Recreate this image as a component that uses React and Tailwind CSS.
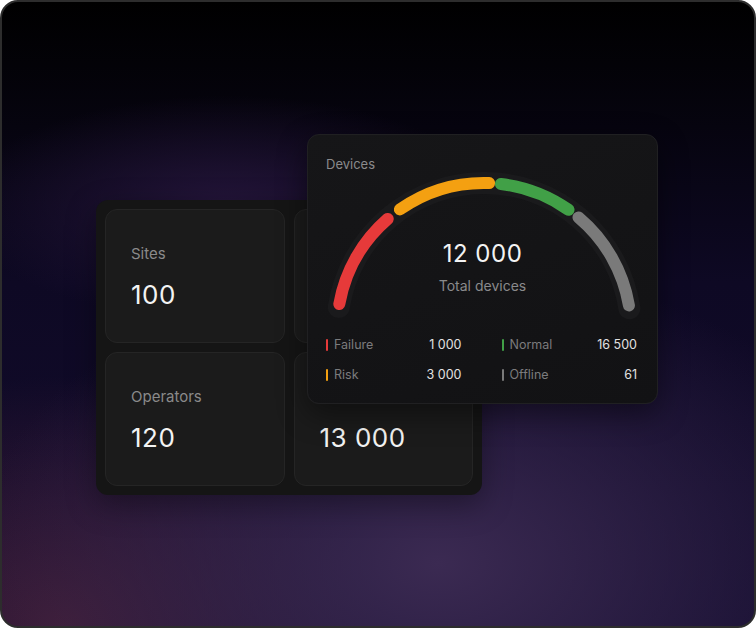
const segments = [
  { from: 169.8, to: 130.9, color: '#e63a3a' },
  { from: 124.9, to: 88, color: '#f4a011' },
  { from: 83.4, to: 54.9, color: '#41a047' },
  { from: 50, to: 9.6, color: '#7a7a7a' },
];

const legend = [
  { label: 'Failure', value: '1 000', bar: 'bg-[#e63a3a]' },
  { label: 'Normal', value: '16 500', bar: 'bg-[#41a047]' },
  { label: 'Risk', value: '3 000', bar: 'bg-[#f4a011]' },
  { label: 'Offline', value: '61', bar: 'bg-[#7a7a7a]' },
];

const stats = [
  { label: 'Sites', value: '100' },
  { label: 'Gateways', value: '42' },
  { label: 'Operators', value: '120' },
  { label: 'Sensors', value: '13 000' },
];

// angles are in degrees, counter-clockwise from the +x axis
function arc(cx, cy, r, a0, a1) {
  const p = (a) => [cx + r * Math.cos((a * Math.PI) / 180), cy - r * Math.sin((a * Math.PI) / 180)];
  const [x0, y0] = p(a0);
  const [x1, y1] = p(a1);
  return `M${x0.toFixed(2)} ${y0.toFixed(2)} A${r} ${r} 0 0 1 ${x1.toFixed(2)} ${y1.toFixed(2)}`;
}

function Gauge() {
  const cx = 176;
  const cy = 158;
  const r = 147;
  return (
    <div className="relative h-[150px]">
      <svg width="351" height="150" viewBox="0 0 351 150" className="block" aria-hidden="true">
        <path d={arc(cx, cy, r, 171, 8.5)} fill="none" stroke="#1a1a1c" strokeWidth="22" strokeLinecap="round" />
        {segments.map((s) => (
          <path key={s.color} d={arc(cx, cy, r, s.from, s.to)} fill="none" stroke={s.color} strokeWidth="12" strokeLinecap="round" />
        ))}
      </svg>
      <div className="absolute inset-x-0 top-[68px] flex flex-col items-center">
        <span className="text-[24px] leading-[28px] tracking-[0.5px] text-[#f3f3f3]">12 000</span>
        <span className="mt-[8px] text-[14px] leading-[20px] text-[#8a8a8c]">Total devices</span>
      </div>
    </div>
  );
}

function DevicesCard() {
  return (
    <div className="absolute right-0 top-0 h-[270px] w-[351px] rounded-[12px] border border-[#202022] bg-[linear-gradient(160deg,#161618,#121214)] shadow-[0_10px_30px_rgba(0,0,0,0.45)]">
      <p className="pl-[18px] pt-[21px] text-[13px] leading-[16px] text-[#8a8a8c]">Devices</p>
      <Gauge />
      <div className="mt-[15px] grid grid-cols-2 gap-x-[40px] gap-y-[14px] pl-[18px] pr-[20px]">
        {legend.map((item) => (
          <div key={item.label} className="flex h-[16px] items-center text-[12.5px] leading-[16px]">
            <span className={`h-[12px] w-[2px] rounded-full ${item.bar}`} />
            <span className="ml-[6px] text-[#7b7b7d]">{item.label}</span>
            <span className="ml-auto text-[#e2e2e2]">{item.value}</span>
          </div>
        ))}
      </div>
    </div>
  );
}

function StatsCard() {
  return (
    <div className="mt-[66px] grid w-[386px] grid-cols-2 gap-[9px] rounded-[12px] bg-[#151515] p-[9px] shadow-[0_10px_30px_rgba(0,0,0,0.35)]">
      {stats.map((s) => (
        <div key={s.label} className="h-[134px] rounded-[12px] border border-[#252525] bg-[#1b1b1b] pl-[25px] pt-[34px]">
          <p className="text-[15px] leading-[20px] text-[#8a8a8a]">{s.label}</p>
          <p className="mt-[15px] text-[26px] leading-[32px] tracking-[0.5px] text-[#f3f3f3]">{s.value}</p>
        </div>
      ))}
    </div>
  );
}

export default function App() {
  return (
    <div className="h-[628px] w-[756px] bg-white font-['Inter',sans-serif]">
      <div className="flex h-full w-full items-center justify-center overflow-hidden rounded-[18px] border-2 border-[#2d2d2d] bg-[radial-gradient(ellipse_62%_48%_at_58%_90%,#3b2a52_0%,rgba(59,42,82,0)_100%),radial-gradient(ellipse_42%_40%_at_8%_100%,#3e1d38_0%,rgba(62,29,56,0)_100%),radial-gradient(ellipse_36%_18%_at_30%_33%,#24153a_0%,rgba(36,21,58,0)_100%),linear-gradient(180deg,#000000_0%,#06040f_20%,#0e0924_45%,#130c2e_100%)]">
        <div className="relative mr-[2px] h-[360px] w-[562px]">
          <StatsCard />
          <DevicesCard />
        </div>
      </div>
    </div>
  );
}
